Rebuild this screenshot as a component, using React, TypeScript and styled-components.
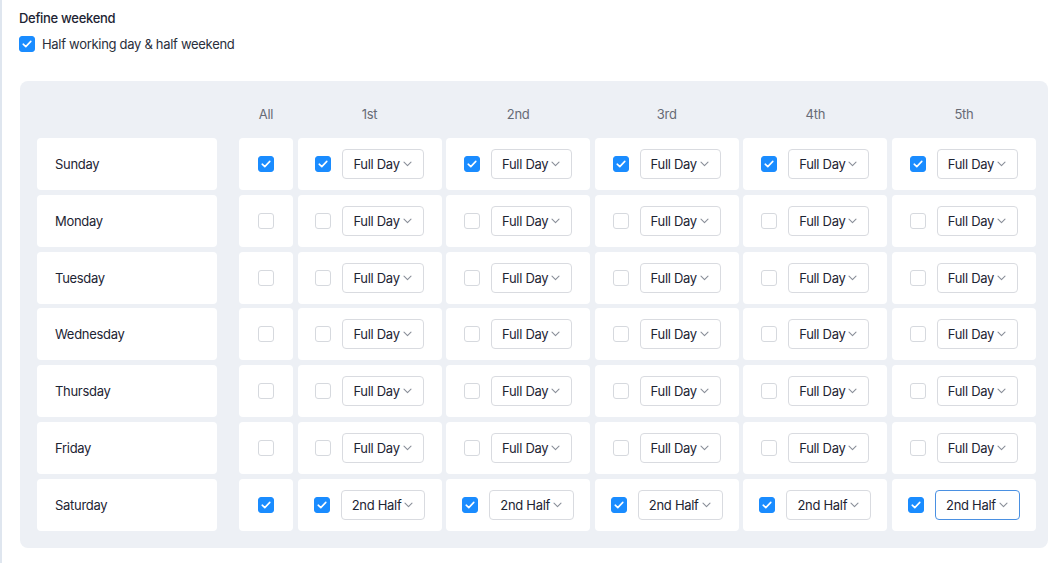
import React from "react";
import styled, { createGlobalStyle } from "styled-components";

const GlobalStyle = createGlobalStyle`
  html, body { margin: 0; padding: 0; background: #fff; }
  body { font-family: Inter, "Noto Sans", "Liberation Sans", sans-serif; color: #1d2433; letter-spacing: -0.3px; }
  * { box-sizing: border-box; }
`;

const Page = styled.div`
  width: 1064px;
  height: 563px;
  border-left: 2px solid #dfe6ef;
  padding: 10px 16px 0 17px;
`;

const Title = styled.div`
  font-size: 13px;
  font-weight: 500;
  color: #1d2433;
  line-height: 16px;
`;

const OptionRow = styled.label`
  display: flex;
  align-items: center;
  gap: 7px;
  margin-top: 10px;
  font-size: 13px;
  color: #2a2f3c;
`;

const Panel = styled.div`
  margin-top: 29px;
  margin-left: 1px;
  width: 1028px;
  background: #edf0f5;
  border-radius: 8px;
  padding: 14px 12px 17px 17px;
  display: flex;
  flex-direction: column;
  gap: 4.8px;
`;

const GridRow = styled.div<{ $header?: boolean }>`
  display: grid;
  grid-template-columns: 197.5px 54px repeat(5, 1fr);
  column-gap: 4.5px;
  height: ${(p) => (p.$header ? "38.2px" : "52px")};
`;

const HeadCell = styled.div`
  display: flex;
  align-items: center;
  justify-content: center;
  font-size: 13px;
  color: #676b75;
`;

const Cell = styled.div`
  background: #fff;
  border-radius: 4px;
  display: flex;
  align-items: center;
  justify-content: center;
  gap: 11px;
`;

const DayCell = styled(Cell)`
  justify-content: flex-start;
  padding-left: 18px;
  margin-right: 17.5px;
  font-size: 13px;
  color: #1d2433;
`;

const Box = styled.span<{ $checked: boolean }>`
  width: 16px;
  height: 16px;
  flex: none;
  border-radius: 3px;
  display: inline-flex;
  align-items: center;
  justify-content: center;
  background: ${(p) => (p.$checked ? "#1a8cff" : "#fff")};
  border: 1px solid ${(p) => (p.$checked ? "#1a8cff" : "#d6d9de")};
`;

const Select = styled.div<{ $focus?: boolean }>`
  height: 30px;
  display: inline-flex;
  align-items: center;
  gap: 3px;
  padding: 0 11px 0 10px;
  border: 1px solid ${(p) => (p.$focus ? "#4a90e2" : "#d9dbe0")};
  border-radius: 4px;
  background: #fff;
  font-size: 13px;
  color: #1d2433;
  white-space: nowrap;
`;

const Check = ({ checked }: { checked: boolean }) => (
  <Box $checked={checked}>
    {checked && (
      <svg width="10" height="8" viewBox="0 0 10 8" fill="none">
        <path d="M1.2 4.2 L3.8 6.6 L8.8 1.4" stroke="#fff" strokeWidth="1.6" strokeLinecap="round" strokeLinejoin="round" />
      </svg>
    )}
  </Box>
);

const Chevron = () => (
  <svg width="9" height="6" viewBox="0 0 9 6" fill="none">
    <path d="M1 1.2 L4.5 4.6 L8 1.2" stroke="#8a8f99" strokeWidth="1.1" strokeLinecap="round" strokeLinejoin="round" />
  </svg>
);

const days = ["Sunday", "Monday", "Tuesday", "Wednesday", "Thursday", "Friday", "Saturday"];
const periods = ["1st", "2nd", "3rd", "4th", "5th"];

export default function App() {
  return (
    <>
      <GlobalStyle />
      <Page>
        <Title>Define weekend</Title>
        <OptionRow>
          <Check checked />
          Half working day &amp; half weekend
        </OptionRow>
        <Panel>
          <GridRow $header>
            <div />
            <HeadCell>All</HeadCell>
            {periods.map((p) => (
              <HeadCell key={p}>{p}</HeadCell>
            ))}
          </GridRow>
          {days.map((d, i) => {
            const checked = i === 0 || i === 6;
            const label = i === 6 ? "2nd Half" : "Full Day";
            return (
              <GridRow key={d}>
                <DayCell>{d}</DayCell>
                <Cell>
                  <Check checked={checked} />
                </Cell>
                {periods.map((p, j) => (
                  <Cell key={p}>
                    <Check checked={checked} />
                    <Select $focus={i === 6 && j === 4}>
                      {label}
                      <Chevron />
                    </Select>
                  </Cell>
                ))}
              </GridRow>
            );
          })}
        </Panel>
      </Page>
    </>
  );
}
